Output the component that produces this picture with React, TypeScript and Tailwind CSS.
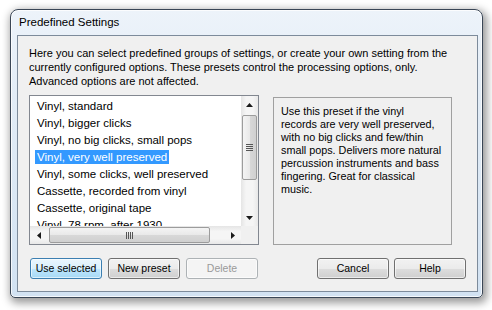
import React from "react";

const items = [
  "Vinyl, standard",
  "Vinyl, bigger clicks",
  "Vinyl, no big clicks, small pops",
  "Vinyl, very well preserved",
  "Vinyl, some clicks, well preserved",
  "Cassette, recorded from vinyl",
  "Cassette, original tape",
  "Vinyl, 78 rpm, after 1930",
];

function Tri({ dir }: { dir: "up" | "down" | "left" | "right" }) {
  const pts =
    dir === "up"
      ? "0,4 7,4 3.5,0"
      : dir === "down"
      ? "0,0 7,0 3.5,4"
      : dir === "left"
      ? "4,0 4,7 0,3.5"
      : "0,0 0,7 4,3.5";
  const w = dir === "up" || dir === "down" ? 7 : 4;
  const h = dir === "up" || dir === "down" ? 4 : 7;
  return (
    <svg width={w} height={h} viewBox={`0 0 ${w} ${h}`}>
      <polygon points={pts} fill="#1a1a1a" />
    </svg>
  );
}

function Btn({
  children,
  kind = "normal",
}: {
  children: React.ReactNode;
  kind?: "normal" | "default" | "disabled";
}) {
  const cls =
    kind === "default"
      ? "border-[#3c7fb1] bg-[linear-gradient(180deg,#eaf6fd_0%,#d9f0fc_50%,#bee6fd_51%,#a7d9f5_100%)] text-black"
      : kind === "disabled"
      ? "border-[#adb2b5] bg-[#f4f4f4] text-[#9a9a9a]"
      : "border-[#707070] bg-[linear-gradient(180deg,#f2f2f2_0%,#ebebeb_50%,#dddddd_51%,#cfcfcf_100%)] text-black";
  return (
    <div
      className={`w-[72px] h-[21px] rounded-[3px] border flex items-center justify-center text-[10.5px] shadow-[inset_0_0_0_1px_rgba(255,255,255,0.6)] ${cls}`}
    >
      {children}
    </div>
  );
}

export default function App() {
  return (
    <div className="w-[492px] h-[310px] bg-white pt-[9px] pl-[10px] overflow-hidden font-['Liberation_Sans',Arial,sans-serif] text-[11px] text-black">
      <div className="w-[473px] h-[289px] rounded-t-[8px] rounded-b-[5px] border border-[#3a4656] bg-[linear-gradient(180deg,#edf3fa_0%,#e2ecf6_30%,#d2e2f2_100%)] shadow-[inset_0_0_0_1px_rgba(255,255,255,0.75),2px_3px_9px_2px_rgba(0,0,0,0.4)] flex flex-col pl-[6px] pr-[4px] pb-[5px]">
        <div className="h-[25px] flex items-center pl-[2px] pt-[1px] text-[11.5px] text-black">
          Predefined Settings
        </div>
        <div className="flex-1 bg-[#f0f0f0] border border-[#7d8b9b] flex flex-col pl-[11px] pr-[11px]">
          <p className="pt-[10px] leading-[14px] whitespace-nowrap">
            Here you can select predefined groups of settings, or create your own setting from the
            <br />
            currently configured options. These presets control the processing options, only.
            <br />
            Advanced options are not affected.
          </p>
          <div className="flex mt-[7px]">
            {/* List box */}
            <div className="w-[230px] h-[150px] border border-[#828790] bg-white flex flex-col">
              <div className="flex h-[130px]">
                <div className="flex-1 overflow-hidden pt-[1px] text-[11.5px]">
                  {items.map((t, i) => (
                    <div key={t} className="h-[17px] flex items-center pl-[5px] whitespace-nowrap">
                      <span
                        className={`px-[2px] h-[14px] leading-[14px] ${
                          i === 3 ? "bg-[#3399ff] text-white" : ""
                        }`}
                      >
                        {t}
                      </span>
                    </div>
                  ))}
                </div>
                {/* vertical scrollbar */}
                <div className="w-[17px] h-full flex flex-col bg-[linear-gradient(90deg,#e5e5e5_0%,#f5f5f5_30%,#f5f5f5_70%,#e8e8e8_100%)]">
                  <div className="h-[17px] flex items-center justify-center">
                    <Tri dir="up" />
                  </div>
                  <div className="mt-[2px] mx-[1px] h-[65px] rounded-[2px] border border-[#9c9c9c] bg-[linear-gradient(90deg,#f4f4f4_0%,#e9e9e9_50%,#d8d8d8_51%,#d0d0d0_100%)] flex flex-col items-center justify-center gap-[1px]">
                    <div className="w-[7px] h-[1px] bg-[#555]" />
                    <div className="w-[7px] h-[1px] bg-[#555]" />
                    <div className="w-[7px] h-[1px] bg-[#555]" />
                    <div className="w-[7px] h-[1px] bg-[#555]" />
                  </div>
                  <div className="flex-1" />
                  <div className="h-[17px] flex items-center justify-center">
                    <Tri dir="down" />
                  </div>
                </div>
              </div>
              {/* horizontal scrollbar */}
              <div className="flex h-[18px]">
                <div className="flex-1 flex items-stretch bg-[linear-gradient(180deg,#e5e5e5_0%,#f5f5f5_30%,#f5f5f5_70%,#e8e8e8_100%)]">
                  <div className="w-[17px] flex items-center justify-center">
                    <Tri dir="left" />
                  </div>
                  <div className="ml-[2px] my-[1px] w-[161px] rounded-[2px] border border-[#9c9c9c] bg-[linear-gradient(180deg,#f4f4f4_0%,#e9e9e9_50%,#d8d8d8_51%,#d0d0d0_100%)] flex items-center justify-center gap-[1px]">
                    <div className="w-[1px] h-[7px] bg-[#555]" />
                    <div className="w-[1px] h-[7px] bg-[#555]" />
                    <div className="w-[1px] h-[7px] bg-[#555]" />
                    <div className="w-[1px] h-[7px] bg-[#555]" />
                  </div>
                  <div className="flex-1" />
                  <div className="w-[17px] flex items-center justify-center">
                    <Tri dir="right" />
                  </div>
                </div>
                <div className="w-[17px] bg-[#f0f0f0]" />
              </div>
            </div>
            {/* Description */}
            <div className="ml-[14px] mt-[2px] w-[179px] h-[148px] border border-[#a0a0a0] bg-[#f0f0f0] pt-[7px] px-[7px] text-[10.8px] leading-[13px] whitespace-nowrap">
              Use this preset if the vinyl
              <br />
              records are very well preserved,
              <br />
              with no big clicks and few/thin
              <br />
              small pops. Delivers more natural
              <br />
              percussion instruments and bass
              <br />
              fingering. Great for classical
              <br />
              music.
            </div>
          </div>
          <div className="flex mt-[13px] ml-[1px]">
            <div className="flex gap-[6px]">
              <Btn kind="default">Use selected</Btn>
              <Btn>New preset</Btn>
              <Btn kind="disabled">Delete</Btn>
            </div>
            <div className="flex gap-[5px] ml-auto">
              <Btn>Cancel</Btn>
              <Btn>Help</Btn>
            </div>
          </div>
        </div>
      </div>
    </div>
  );
}
